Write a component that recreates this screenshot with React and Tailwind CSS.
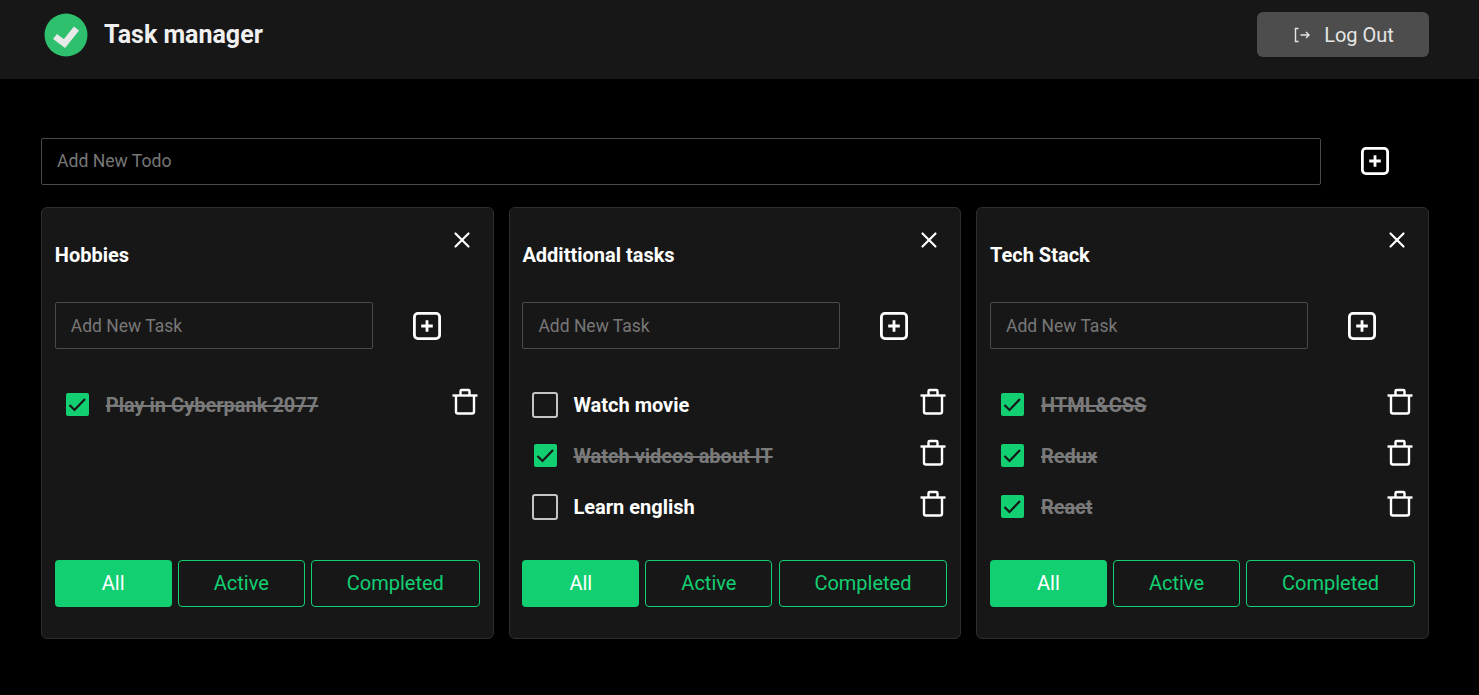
import { X } from 'lucide-react';

const lists = [
    {
        title: 'Hobbies',
        tasks: [{ text: 'Play in Cyberpank 2077', done: true }],
    },
    {
        title: 'Addittional tasks',
        tasks: [
            { text: 'Watch movie', done: false },
            { text: 'Watch videos about IT', done: true },
            { text: 'Learn english', done: false },
        ],
    },
    {
        title: 'Tech Stack',
        tasks: [
            { text: 'HTML&CSS', done: true },
            { text: 'Redux', done: true },
            { text: 'React', done: true },
        ],
    },
];

function PlusBox() {
    return (
        <svg width="30" height="30" viewBox="0 0 30 30" fill="none" stroke="white" strokeLinejoin="round" className="block">
            <rect x="2.4" y="2.4" width="25.2" height="25.2" rx="3.5" strokeWidth="2.8" />
            <path d="M15 9.2v11.6M9.2 15h11.6" strokeWidth="2.8" />
        </svg>
    );
}

function TrashIcon() {
    return (
        <svg width="26" height="27" viewBox="0 0 26 27" fill="none" stroke="white" strokeWidth="2.4" className="block shrink-0">
            <path d="M0.5 7.5h25" />
            <path d="M8.5 7V3.2q0-1.2 1.2-1.2h6.6q1.2 0 1.2 1.2V7" />
            <path d="M4 7.5V23.5a2 2 0 0 0 2 2h14a2 2 0 0 0 2-2V7.5" />
        </svg>
    );
}

function Logo() {
    return (
        <svg width="44" height="44" viewBox="0 0 44 44" className="shrink-0">
            <circle cx="22" cy="22" r="21.5" fill="#2fc06d" />
            <path d="M11 23.5l9.5 7L32.5 15.5" fill="none" stroke="#e8e9e9" strokeWidth="6.5" />
        </svg>
    );
}

function LogoutIcon() {
    return (
        <svg width="16" height="16" viewBox="0 0 16 16" fill="none" stroke="#e5e5e5" strokeWidth="1.4">
            <path d="M4.5 1.5H1.5v13h3" />
            <path d="M6.5 8h8.5M12 5 15 8 12 11" />
        </svg>
    );
}

function TaskRow({ task }) {
    return (
        <li className="flex h-[51px] items-center">
            <div className="flex w-[51px] shrink-0 items-center justify-center pr-[5px]">
                {task.done ? (
                    <span className="flex h-[23px] w-[23px] items-center justify-center rounded-[2px] bg-[#12cf72]">
                        <svg width="23" height="23" viewBox="0 0 23 23" fill="none" stroke="#171717" strokeWidth="2.2">
                            <path d="M3.5 12l5 5L19 6" />
                        </svg>
                    </span>
                ) : (
                    <span className="h-[26px] w-[26px] rounded-[3px] border-2 border-[#c4c4c4]" />
                )}
            </div>
            <span className={`flex-1 pt-[1px] text-[20px] font-bold ${task.done ? 'text-[#7a7a7a] line-through' : 'text-white'}`}>
                {task.text}
            </span>
            <span className="mr-[2px] mb-[7px]">
                <TrashIcon />
            </span>
        </li>
    );
}

function TaskCard({ list }) {
    return (
        <section className="flex h-[432px] flex-col rounded-[6px] border border-[#2e2e2e] bg-[#171717] px-[12.8px]">
            <div className="flex h-[94px] items-start justify-between">
                <h2 className="mt-[32px] text-[20px] font-bold text-white">{list.title}</h2>
                <X size={26} strokeWidth={2} color="white" className="mt-[19px] mr-[5.5px]" />
            </div>
            <div className="flex items-center">
                <input
                    placeholder="Add New Task"
                    className="h-[47px] w-[318px] rounded-[2px] border border-[#4a4a4a] bg-transparent px-[15px] text-[17.5px] text-white outline-none placeholder:text-[#777777]"
                />
                <span className="ml-[39px]">
                    <PlusBox />
                </span>
            </div>
            <ul className="mt-[30px] h-[153px]">
                {list.tasks.map((task) => (
                    <TaskRow key={task.text} task={task} />
                ))}
            </ul>
            <div className="mt-[28px] flex gap-[6.2px]">
                <button className="h-[47px] w-[116.8px] rounded-[4px] bg-[#12cf72] pb-[2px] text-[20px] text-white">All</button>
                <button className="h-[47px] w-[127px] rounded-[4px] border border-[#12cf72] pb-[2px] text-[20px] text-[#12cf72]">Active</button>
                <button className="h-[47px] w-[168.8px] rounded-[4px] border border-[#12cf72] pb-[2px] text-[20px] text-[#12cf72]">Completed</button>
            </div>
        </section>
    );
}

export default function App() {
    return (
        <div className="min-h-[695px] bg-black font-['Roboto',sans-serif]">
            <header className="flex h-[79px] items-center justify-between bg-[#171717] pr-[50px] pb-[10px] pl-[44px]">
                <div className="flex items-center gap-[16px]">
                    <Logo />
                    <span className="text-[25px] font-bold text-[#f0f0f0]">Task manager</span>
                </div>
                <button className="flex h-[45px] w-[172px] items-center justify-center gap-[14px] rounded-[6px] bg-[#4d4d4d] pl-[2px] text-[20px] text-[#e5e5e5]">
                    <LogoutIcon />
                    Log Out
                </button>
            </header>

            <main className="px-[50px] pt-[59px] pl-[41px]">
                <div className="flex items-center">
                    <input
                        placeholder="Add New Todo"
                        className="h-[47px] w-[1280px] rounded-[2px] border border-[#4a4a4a] bg-transparent px-[15px] pb-[2px] text-[17.6px] text-white outline-none placeholder:text-[#777777]"
                    />
                    <span className="mb-[2px] ml-[39px]">
                        <PlusBox />
                    </span>
                </div>
                <div className="mt-[22px] grid grid-cols-3 gap-[14.8px]">
                    {lists.map((list) => (
                        <TaskCard key={list.title} list={list} />
                    ))}
                </div>
            </main>
        </div>
    );
}
